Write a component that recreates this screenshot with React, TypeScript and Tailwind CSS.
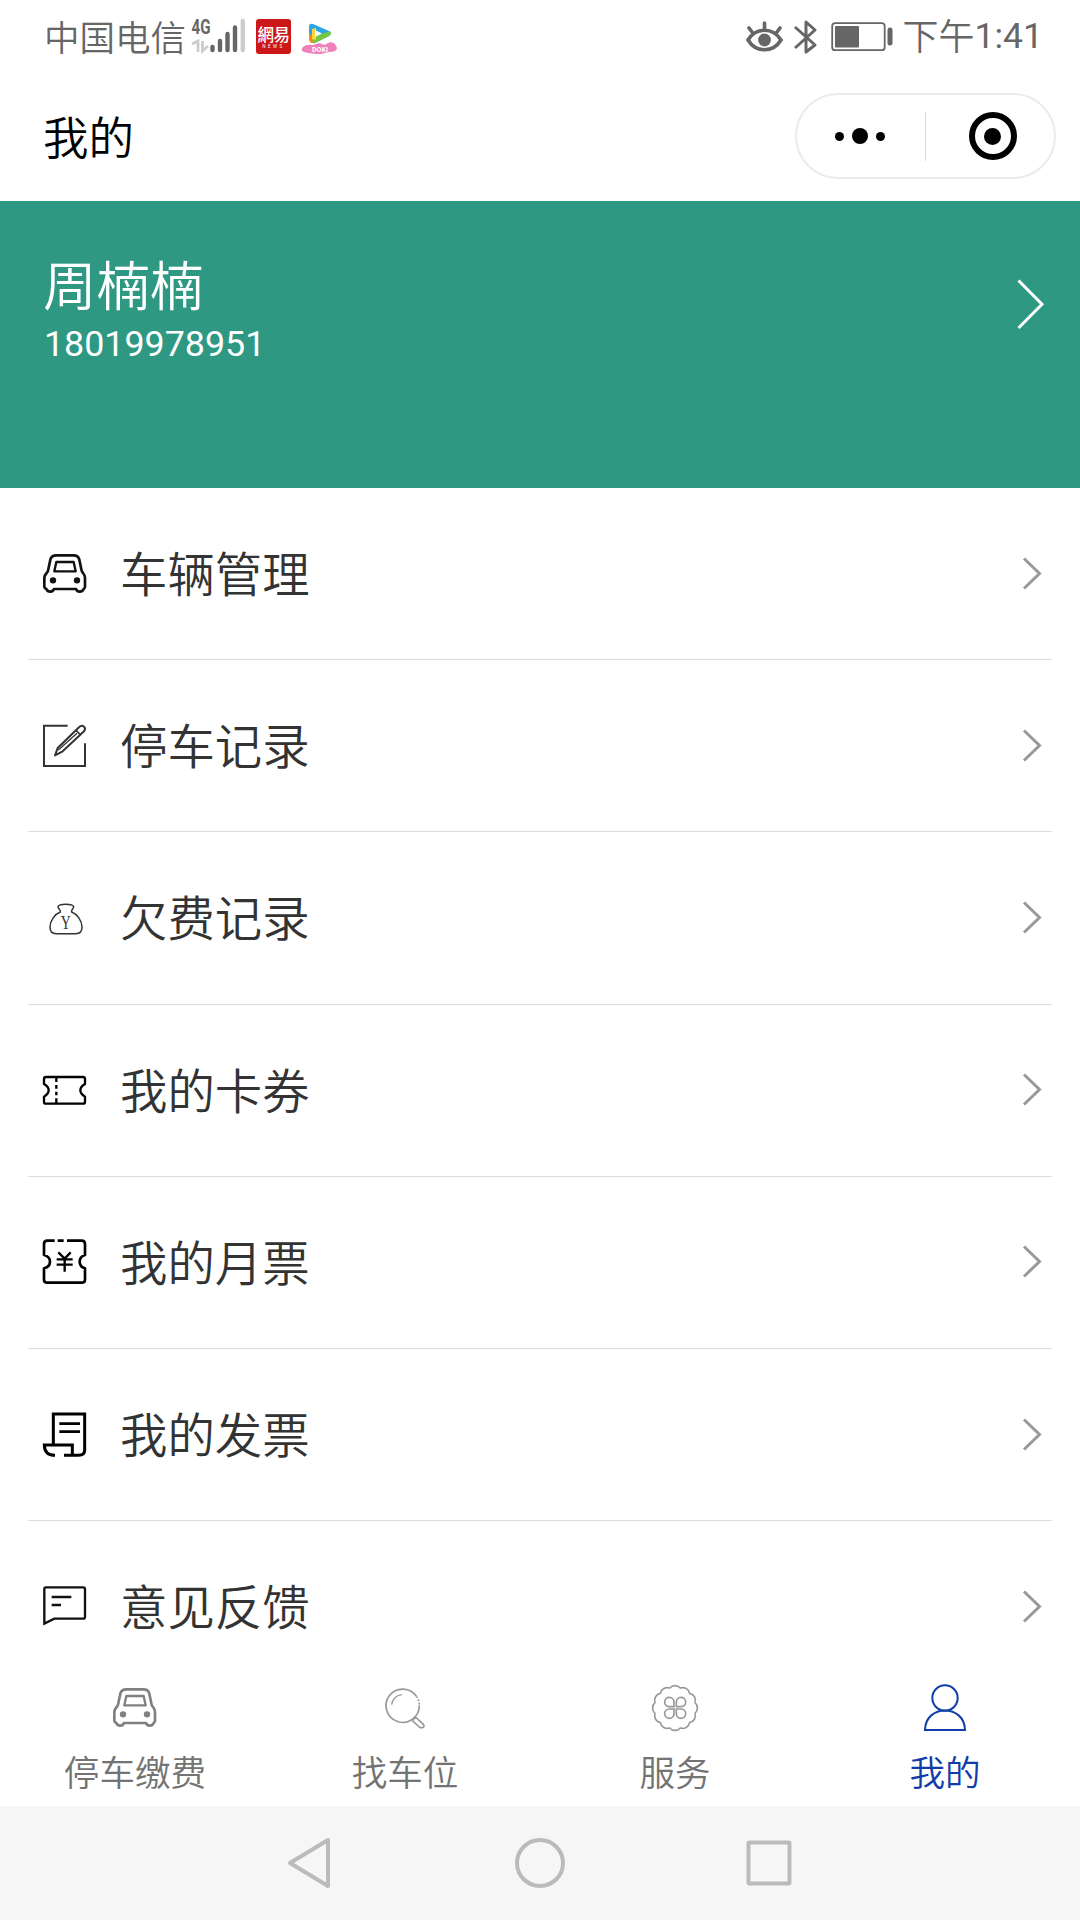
/**
 * Profile page of the parking mini program
 */

import type { ReactNode } from 'react';

type IconProps = { children: ReactNode; className?: string; stroke?: number };

const Icon = ({ children, className = '', stroke = 7 }: IconProps) => (
  <svg
    viewBox="0 0 144 144"
    fill="none"
    stroke="currentColor"
    strokeWidth={stroke}
    className={`size-12 shrink-0 ${className}`}
  >
    {children}
  </svg>
);

const CarIcon = ({ className }: { className?: string }) => (
  <Icon className={className} stroke={8}>
    <path
      strokeLinejoin="round"
      d="M47 16H97Q112 16 115 29L121 58Q122 65 126 69Q132 76 132 84V110Q132 114 128 117Q125 125 116 125Q108 125 105 117H39Q36 125 28 125Q19 125 16 117Q10 114 10 110V84Q10 76 17 69Q21 65 22 58L28 29Q31 16 47 16Z"
    />
    <path strokeLinejoin="round" strokeWidth="7" d="M46 36H98L104 64H40Z" />
    <circle cx="36" cy="91" r="9.5" fill="currentColor" stroke="none" />
    <circle cx="108" cy="91" r="9.5" fill="currentColor" stroke="none" />
  </Icon>
);

const RecordIcon = () => (
  <Icon stroke={6} className="text-[#333]">
    <path d="M80 11H9V132H132V64" />
    <path strokeWidth="6" strokeLinejoin="round" d="M42 100L50 78L114 16Q122 8 129 14Q135 20 129 28L65 88Z" />
    <path strokeWidth="5" d="M105 25L117 37" />
    <path strokeWidth="4" d="M52 84L108 34" />
  </Icon>
);

const MoneyBagIcon = () => (
  <Icon stroke={4.5} className="text-[#333]">
    <path
      strokeLinejoin="round"
      d="M58 54C60 47 50 44 51 38C54 28 95 28 98 38C99 44 89 47 92 54C108 60 123 80 123 99C123 112 116 119 104 119H46C34 119 27 112 27 99C27 80 42 60 58 54Z"
    />
    <text
      x="74"
      y="106"
      textAnchor="middle"
      fill="currentColor"
      stroke="none"
      className="font-['Liberation_Serif',serif] text-[54px]"
      textLength="30"
      lengthAdjust="spacingAndGlyphs"
    >
      Y
    </text>
  </Icon>
);

const CouponIcon = () => (
  <Icon className="text-black">
    <path
      strokeLinejoin="round"
      d="M15 33H126Q132 33 132 39V54Q118 62 118 73Q118 84 132 92V107Q132 113 126 113H15Q9 113 9 107V92Q23 84 23 73Q23 62 9 54V39Q9 33 15 33Z"
    />
    <path d="M46 34V48M46 57V68M46 77V88M46 97V112" />
  </Icon>
);

const MonthlyIcon = () => (
  <Icon className="text-black" stroke={8}>
    <path
      strokeLinejoin="round"
      d="M41 8H19Q9 8 9 18V51Q27 56 27 71Q27 86 9 91V125Q9 134 19 134H122Q132 134 132 125V91Q116 86 116 71Q116 56 132 51V18Q132 8 122 8H78M50 8H68"
    />
    <path strokeWidth="7" d="M52 43L71 62L89 43M71 62V101M47 64H95M47 80H95" />
  </Icon>
);

const InvoiceIcon = () => (
  <Icon stroke={9} className="text-black">
    <path d="M37 102V9H131V118Q131 133 113 133H69" />
    <path strokeWidth="8" d="M55 38H117M55 62H117" />
    <path d="M94 133V102H10Q10 133 42 133" />
  </Icon>
);

const FeedbackIcon = () => (
  <Icon className="text-[#111]">
    <path d="M10 122V18Q10 13 15 13H127Q132 13 132 18V102Q132 107 127 107H40Z" />
    <path d="M32 42H91M32 66H60" />
  </Icon>
);

const SearchIcon = ({ className }: { className?: string }) => (
  <Icon stroke={5} className={className}>
    <path d="M107 38A50 50 0 1 0 115 64" />
    <path strokeDasharray="5 5" d="M107 38Q114 48 115 64" />
    <path strokeWidth="4" d="M32 62A33 33 0 0 1 63 32" />
    <path strokeLinejoin="round" d="M94 110L103 99L125 119Q132 126 127 130Q121 133 115 129Z" />
  </Icon>
);

// scalloped ring, one arc for each of the twelve petals
const petals = Array.from({ length: 12 }, (_, i) => {
  const angle = ((i * 30 + 15 - 90) * Math.PI) / 180;
  return `${(72 + 62 * Math.cos(angle)).toFixed(1)} ${(72 + 62 * Math.sin(angle)).toFixed(1)}`;
});
const ringPath = `M${petals[11]}${petals.map((p) => `A21 21 0 0 1 ${p}`).join('')}Z`;

const ServiceIcon = ({ className }: { className?: string }) => (
  <Icon stroke={5} className={className}>
    <path strokeLinejoin="round" d={ringPath} />
    <path d="M69 68H54A14 14 0 1 1 69 54ZM76 68H91A14 14 0 1 0 76 54ZM69 75H54A14 14 0 1 0 69 89ZM76 75H91A14 14 0 1 1 76 89Z" />
  </Icon>
);

const UserIcon = () => (
  <Icon stroke={6}>
    <circle cx="72" cy="42" r="38" />
    <path d="M12 138C13 60 131 60 132 138Z" />
  </Icon>
);

const menu = [
  { label: '车辆管理', icon: <CarIcon className="text-[#111]" /> },
  { label: '停车记录', icon: <RecordIcon /> },
  { label: '欠费记录', icon: <MoneyBagIcon /> },
  { label: '我的卡券', icon: <CouponIcon /> },
  { label: '我的月票', icon: <MonthlyIcon /> },
  { label: '我的发票', icon: <InvoiceIcon /> },
  { label: '意见反馈', icon: <FeedbackIcon /> },
];

const tabs = [
  { label: '停车缴费', icon: <CarIcon className="text-[#808080]" />, color: 'text-[#737373]' },
  { label: '找车位', icon: <SearchIcon className="text-[#999]" />, color: 'text-[#737373]' },
  { label: '服务', icon: <ServiceIcon className="text-[#999]" />, color: 'text-[#737373]' },
  { label: '我的', icon: <UserIcon />, color: 'text-[#103da8]' },
];

const StatusBar = () => (
  <div className="flex h-[72px] items-center justify-between pl-[44px] pr-[37px] text-[#666]">
    <div className="flex items-center">
      <span className="w-[146px] whitespace-nowrap text-[35.5px] font-[350] leading-[72px]">中国电信</span>
      <svg viewBox="0 0 60 40" className="h-10 w-[60px] overflow-visible">
        <text
          x="1.5"
          y="18"
          fill="#666"
          textLength="19"
          lengthAdjust="spacingAndGlyphs"
          className="font-[Roboto,sans-serif] text-[21px] font-bold"
        >
          4G
        </text>
        <g stroke="#666" strokeWidth="4.4" strokeLinecap="round">
          <path d="M22.5 31V34M30 25V34M37.5 18V34M45 11.5V34" />
          <path stroke="#ccc" d="M52.8 5V34" />
        </g>
        <path stroke="#ccc" strokeWidth="2.8" fill="none" d="M2 28L8 25V36M12.5 25V35L18 30" />
      </svg>
      <div className="ml-[6px] flex h-[35px] w-[35px] flex-col items-center rounded-[3px] bg-[#cc1719] text-white">
        <span className="mt-[5px] text-[16.5px] font-medium leading-[20px] tracking-[-0.5px]">網易</span>
        <span className="font-[Roboto,sans-serif] text-[4.5px] leading-[6px] tracking-[2.5px]">NEWS</span>
      </div>
      <svg viewBox="0 0 36 36" className="ml-[10px] size-9">
        <path fill="#2aa5e8" d="M8 9Q8 5 12 6L28 13Q32 15.5 28 18L14 25Q9 26 8 20Z" />
        <path fill="#f58a1f" d="M8 14L14 24Q9 27 8 21Z" />
        <path fill="#75c840" d="M12 19L29 13Q31 15.5 28 18L14 25Q10 25 12 18Z" />
        <path fill="#ffd634" d="M11 11L15 10V22L11 21Z" />
        <path fill="#fff" d="M14 12L21 15.5L14 19Z" />
        <path fill="#ee82bd" d="M2 29Q5 26 12 27L18 25L24 27Q28 23 33 25Q35 27 36 30Q36 34 28 34L20 36Q10 36 3 34Q-1 32 2 29Z" />
        <text
          x="19"
          y="34"
          textAnchor="middle"
          fill="#fff"
          className="font-[Roboto,sans-serif] text-[7px] font-bold"
        >
          DOKI
        </text>
      </svg>
    </div>
    <div className="flex items-center">
      <svg viewBox="0 0 150 36" fill="none" stroke="#666" className="h-9 w-[150px]">
        {/* eye comfort */}
        <g strokeWidth="3.6" strokeLinecap="round">
          <path d="M3 22C11 9 28 9 36 22C28 35 11 35 3 22Z" />
          <path d="M19.5 11V5M7 14L4 10M32 14L35 10" />
        </g>
        <circle cx="19.5" cy="22" r="6.4" fill="#666" stroke="none" />
        {/* bluetooth */}
        <path strokeWidth="3" strokeLinejoin="round" d="M50 9L70 27L61 34V4L70 12L50 30" />
        {/* battery */}
        <rect x="87.2" y="5.2" width="52.5" height="27" rx="3" strokeWidth="1.8" />
        <rect x="90" y="8" width="24" height="21.5" rx="1" fill="#666" stroke="none" />
        <rect x="142.5" y="9.5" width="5" height="18" rx="2.5" fill="#666" stroke="none" />
      </svg>
      <div className="ml-[8px] flex whitespace-nowrap leading-[72px]">
        <span className="text-[36px] font-[350]">下午</span>
        <span className="font-[Roboto,sans-serif] text-[35.5px] leading-[77px]">1:41</span>
      </div>
    </div>
  </div>
);

const NavHeader = () => (
  <div className="flex h-[129px] items-center justify-between pl-[43px] pr-6">
    <h1 className="-mt-1 text-[45.5px] font-[350] leading-[64px] text-black">我的</h1>
    <div className="-mt-px flex h-[86px] w-[261px] items-center rounded-full border-2 border-[#ebebeb]">
      <div className="flex w-[128px] items-center justify-center gap-2 pr-[2px]">
        <span className="size-[9px] rounded-full bg-black" />
        <span className="size-4 rounded-full bg-black" />
        <span className="size-[9px] rounded-full bg-black" />
      </div>
      <div className="h-[49px] w-px bg-[#dcdcdc]" />
      <div className="flex flex-1 justify-center pl-[5px]">
        <div className="flex size-12 items-center justify-center rounded-full border-[6px] border-black">
          <span className="size-[17px] rounded-full bg-black" />
        </div>
      </div>
    </div>
  </div>
);

const App = () => {
  return (
    <div className="flex h-[1920px] w-[1080px] flex-col overflow-hidden bg-white font-['Noto_Sans_CJK_SC',sans-serif]">
      <StatusBar />
      <NavHeader />

      {/* User card */}
      <div className="flex h-[287px] shrink-0 justify-between bg-[#2e9883] pl-[43px] pr-[35px] pt-[47px] text-white">
        <div>
          <div className="text-[53.5px] font-[350] leading-[70px]">周楠楠</div>
          <div className="ml-[1px] mt-[2px] font-[Roboto,sans-serif] text-[35.8px] leading-[48px]">18019978951</div>
        </div>
        <svg viewBox="0 0 28 54" fill="none" stroke="#fff" strokeWidth="3" className="mt-[29px] h-[54px] w-7">
          <path d="M1.5 3.5L25 27.3L1.5 51" />
        </svg>
      </div>

      {/* Menu */}
      <div className="min-h-0 flex-1 overflow-hidden px-7">
        {menu.map((item) => (
          <div
            key={item.label}
            className="flex h-[172.2px] items-center border-b border-[#dcdcdc] pl-[13px] pr-[10px] text-[#333]"
          >
            {item.icon}
            <span className="-mt-[3px] ml-[31px] flex-1 text-[47.4px] font-[350] leading-[70px]">{item.label}</span>
            <svg viewBox="0 0 20 36" fill="none" stroke="#999" strokeWidth="3" className="h-9 w-5">
              <path d="M2 2.5L17.5 17.5L2 32.5" />
            </svg>
          </div>
        ))}
      </div>

      {/* Tab bar */}
      <div className="grid h-[147px] shrink-0 grid-cols-4 bg-white pt-[25px]">
        {tabs.map((tab) => (
          <div key={tab.label} className={`flex flex-col items-center ${tab.color}`}>
            {tab.icon}
            <span className="mt-[14px] text-[35.6px] font-[350] leading-[50px]">{tab.label}</span>
          </div>
        ))}
      </div>

      {/* System navigation */}
      <div className="flex h-[114px] shrink-0 items-center justify-center bg-[#f6f6f6]">
        <svg viewBox="0 0 508 52" fill="none" stroke="#bbb" strokeWidth="4" strokeLinejoin="round" className="h-[52px] w-[508px]">
          <path d="M4 26L42 3V49Z" />
          <circle cx="254" cy="26" r="23" />
          <rect x="462.5" y="5.5" width="41" height="41" rx="1" />
        </svg>
      </div>
    </div>
  );
};

export default App;
